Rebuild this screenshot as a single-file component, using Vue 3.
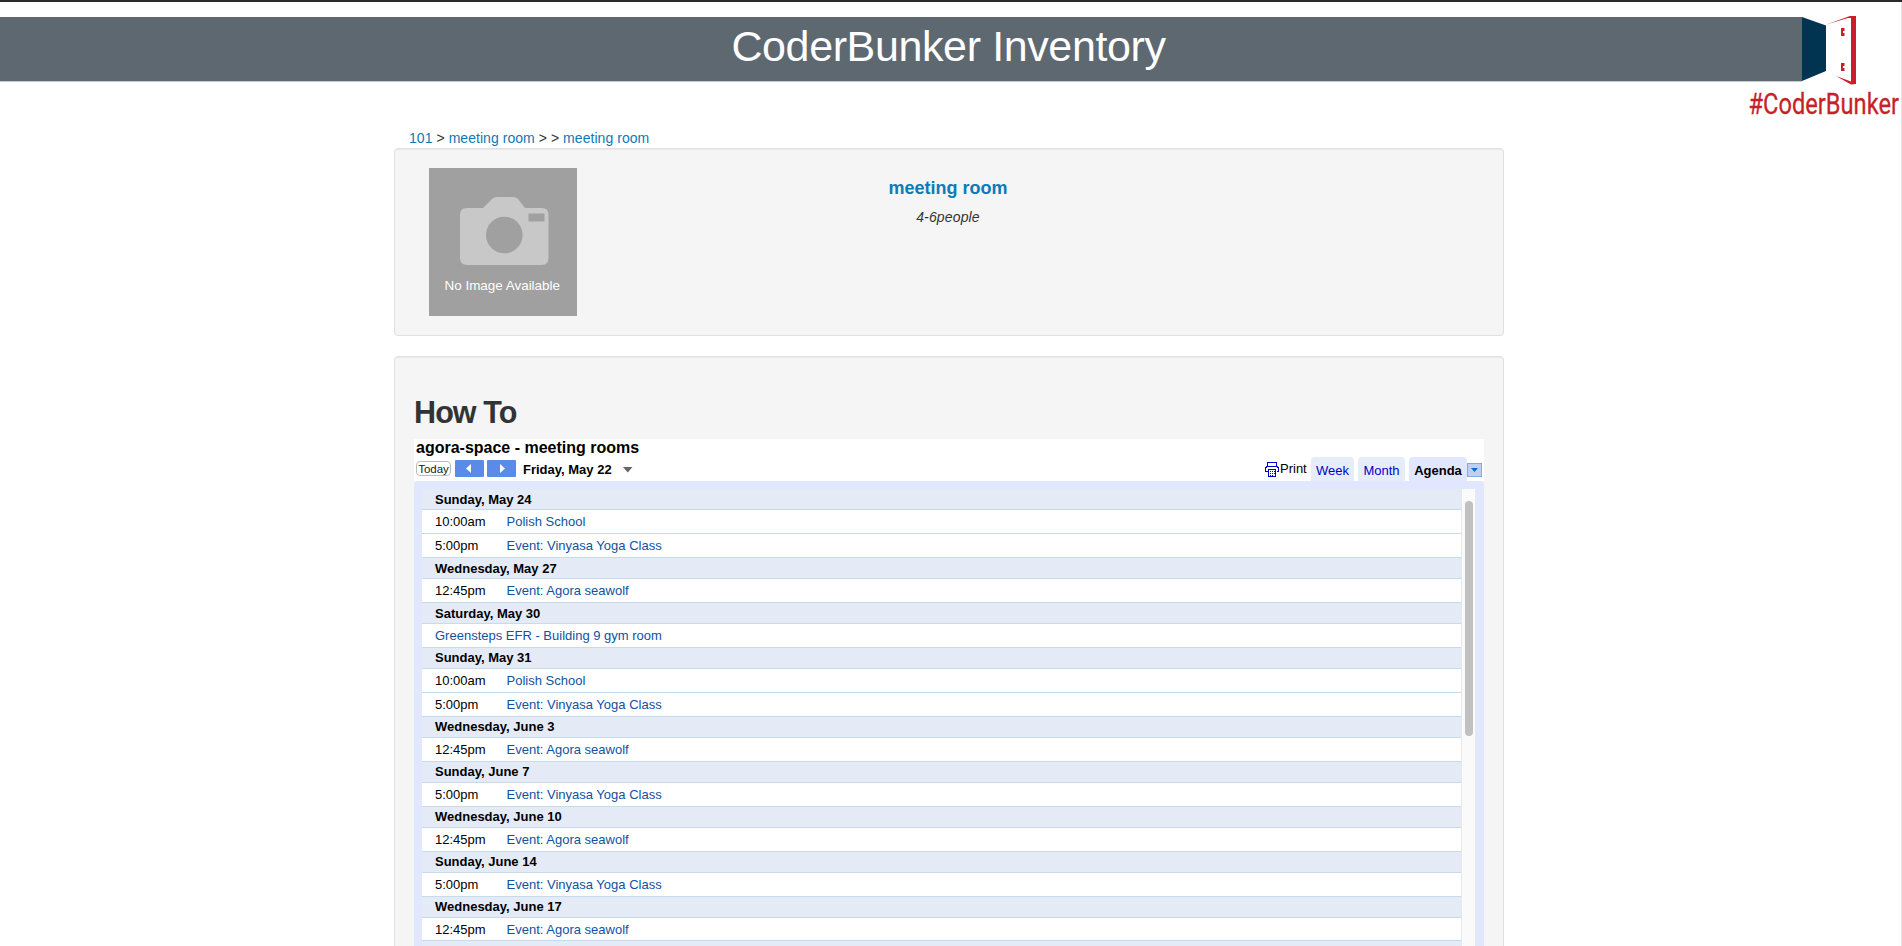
<script setup>
const days = [
  { date: 'Sunday, May 24', events: [['10:00am', 'Polish School'], ['5:00pm', 'Event: Vinyasa Yoga Class']] },
  { date: 'Wednesday, May 27', events: [['12:45pm', 'Event: Agora seawolf']] },
  { date: 'Saturday, May 30', events: [['', 'Greensteps EFR - Building 9 gym room']] },
  { date: 'Sunday, May 31', events: [['10:00am', 'Polish School'], ['5:00pm', 'Event: Vinyasa Yoga Class']] },
  { date: 'Wednesday, June 3', events: [['12:45pm', 'Event: Agora seawolf']] },
  { date: 'Sunday, June 7', events: [['5:00pm', 'Event: Vinyasa Yoga Class']] },
  { date: 'Wednesday, June 10', events: [['12:45pm', 'Event: Agora seawolf']] },
  { date: 'Sunday, June 14', events: [['5:00pm', 'Event: Vinyasa Yoga Class']] },
  { date: 'Wednesday, June 17', events: [['12:45pm', 'Event: Agora seawolf']] },
]
</script>

<template>
  <div class="page">
    <header class="banner">
      <h1>CoderBunker Inventory</h1>
      <svg class="logo" width="154" height="112" viewBox="0 0 154 112">
        <rect x="55" y="0" width="99" height="80" fill="#fff" />
        <path d="M55 2L79 10.500V56L55 66Z" fill="#003450" />
        <path d="M79.500 9.500L103 1H109V69L104 69.500L89 61L104 66.500V3L101 3Z" fill="#c81f29" />
        <path d="M94 13h3.500v3h-1.500v2h1.500v3h-3.500zM94 48h3.500v3h-1.500v2h1.500v3h-3.500z" fill="#c81f29" />
        <text class="brand" x="1.500" y="98.500" textLength="150.500" lengthAdjust="spacingAndGlyphs">#CoderBunker</text>
      </svg>
    </header>

    <main class="content">
      <nav class="crumbs"><a>101</a> &gt; <a>meeting room</a> &gt; &gt; <a>meeting room</a></nav>

      <section class="well room">
        <svg class="photo" width="148" height="148" viewBox="0 0 148 148">
          <rect width="148" height="148" fill="#a0a0a0" />
          <path d="M38 40H54L63 31Q65 29 68 29H84Q87 29 89 31L96 40H113Q119.500 40 119.500 47V90Q119.500 97 113 97H38Q31 97 31 90V47Q31 40 38 40Z" fill="#c8c8c8" />
          <circle cx="75.300" cy="67" r="18.300" fill="#a0a0a0" />
          <rect x="99.500" y="45.500" width="16" height="8" fill="#a0a0a0" />
          <text x="15.500" y="122" textLength="115.500" lengthAdjust="spacingAndGlyphs">No Image Available</text>
        </svg>
        <div class="details">
          <h4>meeting room</h4>
          <em>4-6people</em>
        </div>
        <div class="spacer"></div>
      </section>

      <section class="well howto">
        <h2>How To</h2>
        <div class="calendar">
          <div class="cal-title">agora-space - meeting rooms</div>
          <div class="toolbar">
            <button class="today">Today</button>
            <span class="nav prev"><svg width="29" height="17"><path d="M16 4v9l-5-4.500z" fill="#fff" /></svg></span>
            <span class="nav"><svg width="29" height="17"><path d="M13 4v9l5-4.500z" fill="#fff" /></svg></span>
            <span class="range">Friday, May 22</span>
            <svg class="caret" width="10" height="6"><path d="M0 0h9.500L4.750 5.500z" fill="#666" /></svg>
            <div class="views">
              <svg class="printer" width="14" height="15" viewBox="0 0 14 15" fill="none" stroke="#00c" shape-rendering="crispEdges">
                <path d="M2.500 5V0.500H11.500V5M2.500 9.500H0.500V5.500H1.500V4.500H12.500V5.500H13.500V9.500H11.500" />
                <path d="M3.500 7.500H10.500V14.500H3.500Z" fill="#fff" />
                <path d="M5 9.500H10M5 11.500H10M5 13.500H9" stroke-dasharray="1 1" />
              </svg>
              <span class="print">Print</span>
              <span class="tab week">Week</span>
              <span class="tab month">Month</span>
              <span class="tab agenda">Agenda</span>
              <span class="menu"><svg width="15" height="14"><path d="M4 5h7l-3.500 4z" fill="#1167cc" /></svg></span>
            </div>
          </div>
          <div class="frame">
            <div class="list">
              <div v-for="day in days" :key="day.date" class="day">
                <div class="date">{{ day.date }}</div>
                <div v-for="ev in day.events" :key="ev[1]" class="event">
                  <span v-if="ev[0]" class="time">{{ ev[0] }}</span>
                  <a>{{ ev[1] }}</a>
                </div>
              </div>
              <div class="date"></div>
            </div>
            <div class="track"><div class="thumb"></div></div>
          </div>
        </div>
      </section>
    </main>
  </div>
</template>

<style>
body { margin: 0; background: #fff; }
</style>

<style scoped>
.page {
  box-sizing: border-box;
  width: 1902px;
  height: 946px;
  overflow: hidden;
  border-top: 2px solid #2c2a2e;
  background: linear-gradient(#e6e6e6, #e6e6e6) right top / 1px 100% no-repeat #fff;
  font-family: "Liberation Sans", Arial, sans-serif;
  color: #333;
  font-size: 14px;
}
.banner {
  position: relative;
  box-sizing: border-box;
  height: 65px;
  margin: 15px 1px 0 0;
  background: #5e6870;
  border-bottom: 1px solid #c5cacd;
}
.banner h1 {
  margin: 0;
  width: 1897px;
  text-align: center;
  font-weight: 400;
  font-size: 43px;
  letter-spacing: -0.380px;
  line-height: 58px;
  color: #fff;
  white-space: nowrap;
}
.logo { position: absolute; right: 0; top: -2px; overflow: visible; }
.brand { font-family: Roboto, sans-serif; font-size: 29px; fill: #c81f29; stroke: #c81f29; stroke-width: 0.3px; }
.content { width: 1110px; margin-left: 394px; }
.crumbs { height: 20px; padding: 46px 0 0 15px; line-height: 20px; letter-spacing: 0.050px; }
a { color: #0e7ab5; }
.well {
  box-sizing: border-box;
  border: 1px solid #e0e0e0;
  border-radius: 4px;
  background: #f5f5f5;
  box-shadow: inset 0 1px 1px rgba(0, 0, 0, 0.05);
}
.room { display: flex; height: 188px; margin-bottom: 20px; padding: 19px 0 0 34px; }
.photo text { font-size: 13px; fill: #fff; }
.details { flex: 1; text-align: center; }
.details h4 { margin: 9px 0 0; font-size: 18px; line-height: 22px; color: #0e7ab5; }
.details em { display: block; margin-top: 8px; line-height: 20px; letter-spacing: 0.150px; }
.spacer { width: 184px; }
.howto { height: 620px; padding: 36px 19px 0; }
h2 { margin: 0; height: 46px; line-height: 39px; font-size: 30.500px; letter-spacing: -0.900px; }
.calendar { background: #fff; height: 560px; color: #000; }
.cal-title { height: 20px; padding-left: 2px; font-weight: 700; font-size: 16px; line-height: 18px; white-space: nowrap; }
.toolbar { display: flex; align-items: flex-start; height: 22px; padding: 0 2px; font-size: 13px; }
.today {
  box-sizing: border-box;
  width: 35px;
  height: 15px;
  margin: 2px 4px 0 0;
  padding: 0;
  border: 1px solid #bbb;
  border-radius: 4px;
  background: #fff;
  font: 11.500px/14px "Liberation Sans", Arial, sans-serif;
  color: #222;
}
.nav { width: 29px; height: 17px; margin-top: 1px; background: #5b8be8; border-radius: 1px; }
.nav svg, .menu svg { display: block; }
.prev { margin-right: 3px; }
.range { margin: 2px 0 0 7px; width: 100px; font-weight: 700; line-height: 17px; white-space: nowrap; }
.caret { margin-top: 8px; }
.views { display: flex; margin-left: auto; color: #00c; }
.printer { margin: 3px 1px 0 0; }
.print { width: 31px; color: #000; line-height: 19px; }
.tab {
  box-sizing: border-box;
  height: 24px;
  margin-top: -2px;
  border-radius: 4px 4px 0 0;
  background: #e6edf8;
  text-align: center;
  line-height: 27px;
}
.week { width: 43px; margin-right: 4px; }
.month { width: 47px; margin-right: 4px; }
.agenda { width: 58px; background: #e0e7ff; color: #000; font-weight: 700; }
.menu { box-sizing: border-box; width: 15px; height: 14px; margin-top: 4px; background: #bfd0f2; box-shadow: inset 0 0 0 1px #86a8df; }
.frame { display: flex; height: 500px; padding: 8px 8px 0; background: #e0e7ff; border-radius: 3px 3px 0 0; }
.list { flex: 1; background: #fff; font-size: 13px; }
.date {
  box-sizing: border-box;
  height: 21px;
  padding-left: 13px;
  border-bottom: 1px solid #c6dcec;
  background: #e4ebf7;
  font-weight: 700;
  line-height: 21px;
}
.day:nth-child(n + 4) .date { line-height: 19px; }
.event {
  box-sizing: border-box;
  display: flex;
  height: 24px;
  padding-left: 13px;
  border-bottom: 1px solid #c6dcec;
  line-height: 24px;
  white-space: nowrap;
}
.day:nth-last-child(2) .event { height: 23px; }
.event a { color: #11529f; }
.time { width: 71.500px; }
.track { box-sizing: border-box; width: 15px; padding: 12px 0 0 3px; background: #fafafa; border: solid #e8e8e8; border-width: 0 1px; }
.thumb { width: 8px; height: 235px; border-radius: 4px; background: #c1c1c1; }
</style>
